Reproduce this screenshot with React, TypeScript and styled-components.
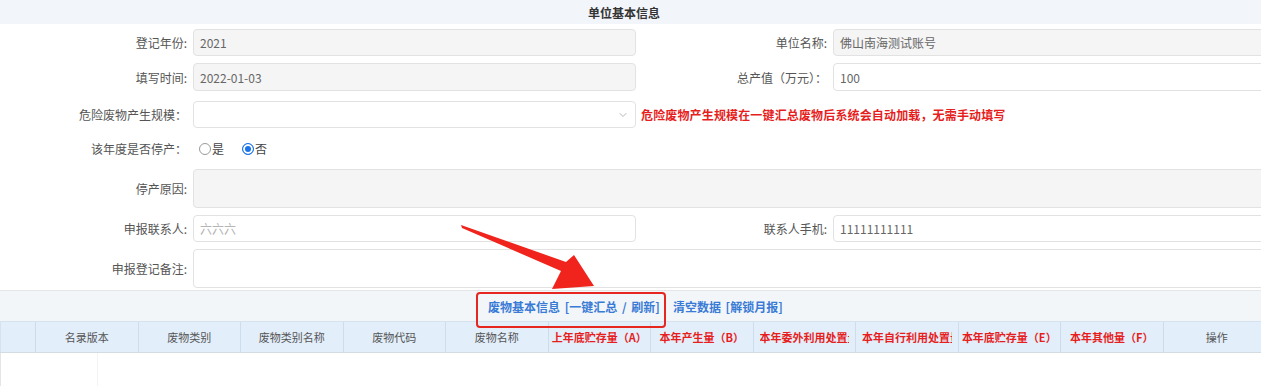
import * as React from "react";
import styled, { createGlobalStyle } from "styled-components";
import { ChevronDown } from "lucide-react";

const GlobalStyle = createGlobalStyle`
  html, body {
    margin: 0;
    padding: 0;
    background: #fff;
    overflow: hidden;
  }
  body {
    font-family: "Noto Sans CJK SC", "Noto Sans", sans-serif;
  }
`;

const Page = styled.div`
  position: relative;
  width: 1270px;
  height: 386px;
  overflow: hidden;
`;

const TitleBar = styled.div`
  height: 24px;
  background: #f2f5f9;
  display: flex;
  align-items: center;
  justify-content: center;
  padding-right: 22px;
  font-size: 12px;
  font-weight: 700;
  color: #333;
`;

const Form = styled.div`
  display: flex;
  flex-direction: column;
  gap: 7px;
  padding-top: 5px;
`;

const Row = styled.div<{ $mt?: number }>`
  display: grid;
  grid-template-columns: 193px 443px 197px 1fr;
  align-items: center;
  margin-top: ${(p) => p.$mt ?? 0}px;
`;

const Label = styled.div`
  text-align: right;
  padding-right: 6px;
  font-size: 12px;
  color: #555;
  white-space: nowrap;
`;

const Field = styled.div<{ $disabled?: boolean; $h?: number; $wide?: boolean; $muted?: boolean }>`
  height: ${(p) => p.$h ?? 27}px;
  box-sizing: border-box;
  border: 1px solid #e2e2e2;
  border-radius: 4px;
  background: ${(p) => (p.$disabled ? "#f5f5f5" : "#fff")};
  padding: 0 6px;
  display: flex;
  align-items: center;
  justify-content: space-between;
  font-size: 12px;
  color: ${(p) => (p.$muted ? "#b5b5b5" : "#666")};
  grid-column: ${(p) => (p.$wide ? "2 / 5" : "auto")};
`;

const Hint = styled.div`
  grid-column: 3 / 5;
  padding-left: 5px;
  font-size: 12px;
  font-weight: 700;
  color: #e61e1e;
  white-space: nowrap;
  letter-spacing: 0.15px;
`;

const RadioGroup = styled.div`
  display: flex;
  align-items: center;
  gap: 18px;
  padding-left: 6px;
  font-size: 12px;
  color: #444;
  height: 27px;
`;

const RadioItem = styled.label`
  display: flex;
  align-items: center;
  gap: 1px;
`;

const Dot = styled.span<{ $on?: boolean }>`
  width: 12px;
  height: 12px;
  box-sizing: border-box;
  border-radius: 50%;
  border: 1px solid ${(p) => (p.$on ? "#1a73e8" : "#9a9a9a")};
  background: ${(p) => (p.$on ? "#1a73e8" : "#fff")};
  box-shadow: ${(p) => (p.$on ? "inset 0 0 0 2px #fff" : "none")};
`;

const Section = styled.div`
  margin-top: 2px;
  height: 30px;
  border-top: 1px solid #e6e6e6;
  background: #f3f6f9;
  display: flex;
  align-items: center;
  padding-left: 488px;
  gap: 13px;
  font-size: 12px;
  font-weight: 700;
  color: #3a7bd5;
  white-space: nowrap;
`;

const Link = styled.span`
  word-spacing: 2px;
`;

const Head = styled.div`
  display: grid;
  grid-template-columns: 35px repeat(11, 102.5px) 1fr;
  height: 32px;
  background: #e2eefa;
  border-top: 1px solid #d6e2ee;
  border-bottom: 1px solid #d3dbe3;
  box-sizing: border-box;
`;

const Cell = styled.div<{ $red?: boolean }>`
  display: flex;
  align-items: center;
  justify-content: center;
  border-left: 1px solid #cfdceb;
  padding: 0 6px;
  overflow: hidden;
  white-space: nowrap;
  font-size: 11px;
  font-weight: ${(p) => (p.$red ? 700 : 400)};
  color: ${(p) => (p.$red ? "#e61e1e" : "#555")};
  &:first-child {
    border-left: 1px solid #d6e2ee;
  }
`;

const ClipText = styled.span`
  display: block;
  width: 100%;
  overflow: hidden;
  text-align: left;
`;

const Body = styled.div`
  height: 40px;
  border-left: 1px solid #e5e5e5;
  display: grid;
  grid-template-columns: 97px 1fr;
`;

const BodyCol = styled.div`
  border-right: 1px solid #f4f4f4;
`;

const Highlight = styled.div`
  position: absolute;
  left: 476px;
  top: 292px;
  width: 190px;
  height: 36px;
  box-sizing: border-box;
  border: 2.5px solid #e5271f;
  border-radius: 4px;
  pointer-events: none;
`;

const Arrow = styled.svg`
  position: absolute;
  left: 455px;
  top: 218px;
  pointer-events: none;
`;

const headers: { t: string; red?: boolean; clip?: boolean }[] = [
  { t: "" },
  { t: "名录版本" },
  { t: "废物类别" },
  { t: "废物类别名称" },
  { t: "废物代码" },
  { t: "废物名称" },
  { t: "上年底贮存量（A）", red: true },
  { t: "本年产生量（B）", red: true },
  { t: "本年委外利用处置量（C）", red: true, clip: true },
  { t: "本年自行利用处置量（D）", red: true, clip: true },
  { t: "本年底贮存量（E）", red: true },
  { t: "本年其他量（F）", red: true },
  { t: "操作" },
];

export default function App() {
  return (
    <Page>
      <GlobalStyle />
      <TitleBar>单位基本信息</TitleBar>
      <Form>
        <Row>
          <Label>登记年份:</Label>
          <Field $disabled>2021</Field>
          <Label>单位名称:</Label>
          <Field $disabled>佛山南海测试账号</Field>
        </Row>
        <Row>
          <Label>填写时间:</Label>
          <Field $disabled $h={28}>2022-01-03</Field>
          <Label>总产值（万元）：</Label>
          <Field $h={28}>100</Field>
        </Row>
        <Row $mt={3}>
          <Label>危险废物产生规模：</Label>
          <Field>
            <span />
            <ChevronDown size={12} color="#a0a0a0" strokeWidth={1.5} />
          </Field>
          <Hint>危险废物产生规模在一键汇总废物后系统会自动加载，无需手动填写</Hint>
        </Row>
        <Row>
          <Label>该年度是否停产：</Label>
          <RadioGroup>
            <RadioItem>
              <Dot />是
            </RadioItem>
            <RadioItem>
              <Dot $on />否
            </RadioItem>
          </RadioGroup>
        </Row>
        <Row>
          <Label>停产原因:</Label>
          <Field $disabled $wide $h={39} />
        </Row>
        <Row>
          <Label>申报联系人:</Label>
          <Field $muted>六六六</Field>
          <Label>联系人手机:</Label>
          <Field>11111111111</Field>
        </Row>
        <Row>
          <Label>申报登记备注:</Label>
          <Field $wide $h={39} />
        </Row>
      </Form>
      <Section>
        <Link>废物基本信息 [一键汇总 / 刷新]</Link>
        <Link>清空数据 [解锁月报]</Link>
      </Section>
      <Head>
        {headers.map((h, i) => (
          <Cell key={i} $red={h.red}>
            {h.clip ? <ClipText>{h.t}</ClipText> : h.t}
          </Cell>
        ))}
      </Head>
      <Body>
        <BodyCol />
        <div />
      </Body>
      <Highlight />
      <Arrow width="145" height="75" viewBox="0 0 145 75">
        <polygon
          points="6,7 111,44 119,37 139,68 97,71 106,53 7,10"
          fill="#f0241c"
        />
      </Arrow>
    </Page>
  );
}
